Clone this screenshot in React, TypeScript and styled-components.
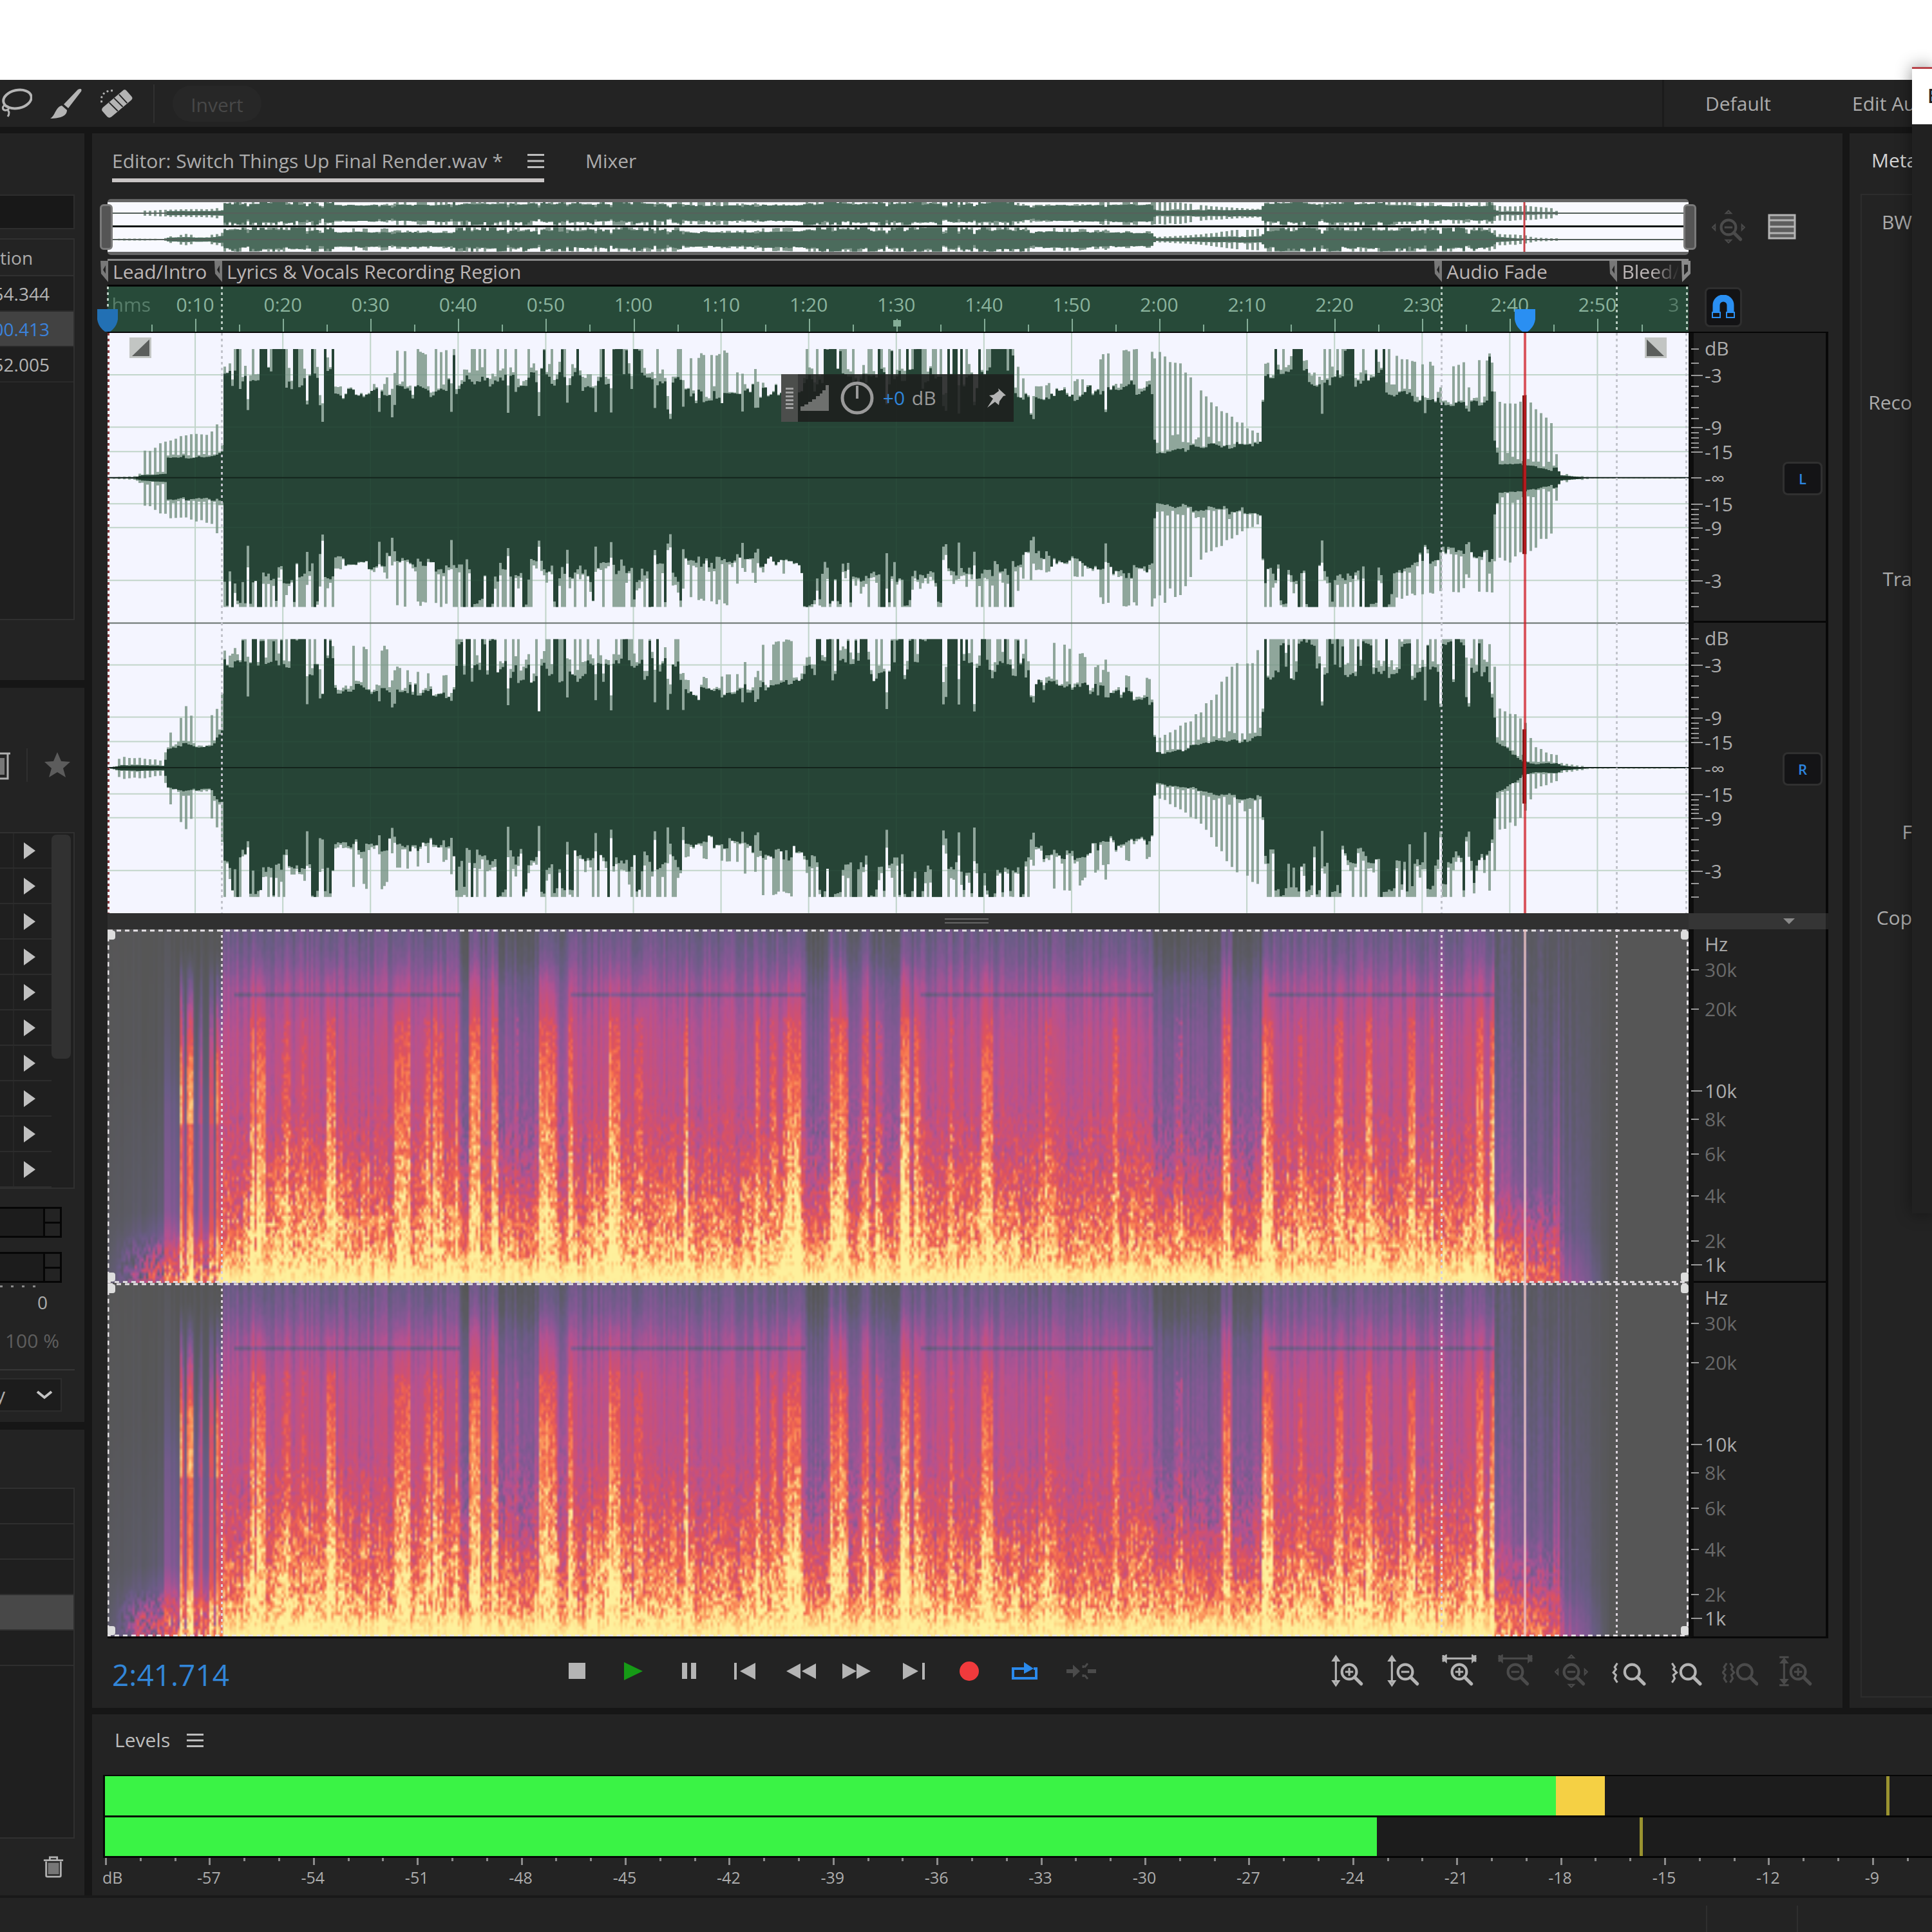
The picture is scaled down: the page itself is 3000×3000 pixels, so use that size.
import React, { useLayoutEffect, useMemo, useRef } from "react";
import styled, { createGlobalStyle, css } from "styled-components";

const GlobalStyle = createGlobalStyle`
  * { box-sizing: border-box; }
  html, body { margin: 0; background: #ffffff; }
  body {
    font-family: "Open Sans", "Noto Sans", sans-serif;
    font-size: 30px;
    line-height: 40px;
    color: #acacac;
    overflow: hidden;
  }
  button, input, select {
    font: inherit;
    color: inherit;
    background: none;
    border: 0;
    padding: 0;
    margin: 0;
  }
  svg { display: block; }
`;

/* ---------- data ---------- */

const DURATION = 180.4;
const PLAYHEAD = 161.714;
const LYRICS = 13;
const FADE = 152.2;
const BLEED = 172.2;
const at = (seconds: number) => `${(seconds / DURATION) * 100}%`;

const REGIONS = [
  { name: "Lead/Intro", start: 0, fade: false },
  { name: "Lyrics & Vocals Recording Region", start: LYRICS, fade: false },
  { name: "Audio Fade", start: FADE, fade: false },
  { name: "Bleed/T", start: BLEED, fade: true },
];

const RULER = Array.from({ length: 17 }, (_, i) => {
  const s = (i + 1) * 10;
  return { s, label: `${Math.floor(s / 60)}:${String(s % 60).padStart(2, "0")}` };
});

const DB_LABELS: [string, number][] = [
  ["dB", 24], ["-3", 66], ["-9", 147], ["-15", 185], ["-∞", 226], ["-15", 266], ["-9", 303], ["-3", 385],
];
const DB_TICKS: [number, number][] = [
  [24, 8], [46, 8], [65, 14], [82, 8], [97, 8], [115, 8], [132, 8], [146, 14], [154, 8], [162, 8], [170, 8], [177, 8],
  [184, 14], [224, 12], [265, 14], [273, 8], [281, 8], [288, 8], [294, 8], [302, 14], [317, 8], [335, 8], [352, 8],
  [367, 8], [384, 14], [403, 8], [424, 8],
];
const HZ_LABELS: [string, number, boolean][] = [
  ["Hz", 23, true], ["30k", 63, false], ["20k", 124, false], ["10k", 251, true], ["8k", 295, false],
  ["6k", 349, false], ["4k", 413, false], ["2k", 483, false], ["1k", 520, true],
];

type Stop = [number, number, number];
/* x, steady level, peak level */
const LEFT_ENVELOPE: Stop[] = [
  [0, 0, 1], [40, 1, 3], [50, 4, 40], [88, 6, 60], [92, 32, 62], [165, 34, 74], [177, 40, 130], [179, 170, 202],
  [348, 170, 202], [352, 130, 142], [430, 132, 148], [440, 132, 200], [540, 146, 202], [560, 165, 202],
  [890, 168, 202], [896, 132, 192], [970, 130, 200], [980, 134, 146], [1075, 138, 152], [1085, 166, 202],
  [1400, 170, 202], [1408, 134, 192], [1425, 122, 142], [1530, 138, 158], [1545, 144, 202], [1621, 144, 202],
  [1625, 40, 204], [1660, 46, 190], [1700, 50, 130], [1760, 52, 86], [1788, 56, 70], [1795, 170, 202],
  [1980, 168, 202], [2000, 140, 190], [2090, 112, 180], [2140, 122, 184], [2146, 170, 202], [2152, 60, 140],
  [2160, 22, 134], [2200, 22, 130], [2240, 12, 90], [2246, 20, 46], [2256, 4, 8], [2290, 1, 3], [2300, 0, 1],
  [2455, 0, 1],
];
const RIGHT_ENVELOPE: Stop[] = [
  [0, 0, 2], [20, 4, 18], [60, 4, 16], [86, 3, 12], [92, 32, 50], [120, 36, 100], [145, 32, 60], [165, 40, 90],
  [177, 60, 120], [179, 166, 202], [348, 168, 202], [352, 122, 190], [430, 124, 190], [445, 124, 160],
  [535, 122, 144], [540, 158, 202], [888, 170, 202], [894, 114, 140], [980, 124, 148], [1000, 130, 200],
  [1075, 138, 202], [1085, 166, 202], [1428, 170, 202], [1434, 132, 202], [1500, 134, 190], [1540, 122, 156],
  [1621, 110, 140], [1625, 24, 44], [1670, 30, 70], [1710, 40, 106], [1740, 42, 156], [1790, 50, 190],
  [1796, 156, 202], [2140, 150, 202], [2150, 100, 190], [2156, 40, 100], [2196, 12, 86], [2215, 6, 34],
  [2250, 8, 20], [2256, 4, 8], [2290, 1, 3], [2300, 0, 1], [2455, 0, 1],
];
const NOTCHES = [
  216, 307, 330, 419, 442, 532, 621, 668, 712, 757, 781, 848, 870, 893, 983, 1006, 1209, 1298, 1321, 1345, 1434,
  1547, 1885, 2045, 2067, 2110,
];

function randomSource(seed: number) {
  let s = seed;
  return () => {
    s = (s + 0x6d2b79f5) | 0;
    let t = Math.imul(s ^ (s >>> 15), 1 | s);
    t = (t + Math.imul(t ^ (t >>> 7), 61 | t)) ^ t;
    return ((t ^ (t >>> 14)) >>> 0) / 4294967296;
  };
}

function sample(stops: Stop[], x: number): [number, number] {
  for (let i = 1; i < stops.length; i++) {
    if (x <= stops[i][0]) {
      const a = stops[i - 1];
      const b = stops[i];
      const k = (x - a[0]) / (b[0] - a[0]);
      return [a[1] + (b[1] - a[1]) * k, a[2] + (b[2] - a[2]) * k];
    }
  }
  return [0, 0];
}

const bar = (x: number, up: number, down: number, mid: number, w: number) =>
  `M${x} ${(mid - up).toFixed(1)}h${w}V${(mid + down).toFixed(1)}h-${w}z`;

function buildWave(stops: Stop[], mid: number, seed: number, scale = 1) {
  const rnd = randomSource(seed);
  const w = 4;
  let peaks = "";
  let core = "";
  const swing = [0, 0];
  for (let x = 0; x < 2455; x += w) {
    const [low, high] = sample(stops, x);
    const notch = NOTCHES.some((n) => Math.abs(n - x) <= w / 2) && low > 100;
    const loud = low > 145;
    const sparse = low < 80;
    const depth = 86 + rnd() * 26;
    const pick = rnd();
    const spike = sparse ? (x / w) % 2 === 0 && pick > 0.15 : pick > 0.66;
    const side = (n: number) => {
      if (rnd() > 0.6) swing[n] = rnd();
      else swing[n] = swing[n] * 0.7 + rnd() * 0.3;
      let c: number;
      let p: number;
      if (notch) {
        c = depth + rnd() * 8;
        p = c + 62 * rnd();
      } else if (loud) {
        c = 124 + (low - 150) * 0.6 + 58 * swing[n] + (swing[n] > 0.62 ? 26 : 0) - n * 8;
        p = swing[n] > 0.68 || rnd() > 0.7 ? 200 : c + rnd() * 22;
      } else {
        c = low * (sparse ? 0.85 + swing[n] * 0.25 : 0.88 + swing[n] * 0.2);
        p = spike ? low + (high - low) * (0.84 + rnd() * 0.16) : c + (high - low) * rnd() * 0.16;
      }
      c = Math.min(200, c);
      p = Math.min(200, Math.max(c, p));
      return [p * scale, c * scale];
    };
    const [pu, cu] = side(0);
    const [pd, cd] = side(1);
    peaks += bar(x, pu, pd, mid, w);
    core += bar(x, cu, cd, mid, w);
  }
  return { peaks, core };
}

/* ---------- spectrogram ---------- */

const PALETTE: [number, number, number, number][] = [
  [0, 86, 86, 86], [0.1, 92, 91, 102], [0.2, 106, 92, 134], [0.3, 136, 88, 150], [0.4, 180, 82, 146],
  [0.5, 206, 80, 116], [0.6, 226, 84, 88], [0.7, 246, 112, 78], [0.8, 252, 158, 96], [0.9, 254, 206, 126],
  [1, 254, 240, 156],
];
const LOUD: [number, number][] = [
  [0, 0.2], [0.08, 0.26], [0.16, 0.35], [0.3, 0.42], [0.5, 0.45], [0.66, 0.49], [0.78, 0.56], [0.88, 0.67],
  [0.93, 0.78], [0.98, 0.95], [1, 1],
];
const INTRO: [number, number][] = [[0, 0.01], [0.4, 0.05], [0.8, 0.16], [0.92, 0.32], [1, 0.4]];
const OUTRO: [number, number][] = [[0, 0.14], [0.3, 0.22], [0.6, 0.3], [0.85, 0.4], [0.93, 0.54], [1, 0.66]];
/* centre, half width, strength */
const HOT: [number, number, number][] = [
  [115, 4, 0.8], [125, 5, 0.9], [141, 3, 0.4], [160, 3, 0.8], [172, 5, 0.7], [223, 4, 0.8], [236, 8, 1],
  [275, 6, 0.35], [303, 3, 0.35], [345, 7, 1], [446, 3, 0.9], [458, 10, 0.85], [495, 4, 0.8], [511, 9, 0.7],
  [540, 3, 0.5], [568, 8, 1.05], [600, 5, 0.8], [635, 3, 0.4], [683, 14, 1], [718, 4, 0.8], [785, 8, 1],
  [822, 6, 0.6], [895, 3, 0.85], [1008, 4, 0.95], [1030, 5, 0.7], [1062, 14, 0.8], [1126, 4, 0.8], [1140, 10, 0.9],
  [1175, 5, 0.5], [1197, 5, 0.6], [1235, 7, 1.1], [1257, 5, 0.9], [1310, 3, 0.35], [1365, 9, 0.85],
  [1459, 4, 0.6], [1564, 5, 0.6], [1662, 4, 0.4], [1736, 6, 0.8], [1800, 8, 1.05], [1850, 4, 0.6],
  [1909, 6, 0.8], [1956, 6, 0.8], [2023, 5, 0.8], [2055, 3, 0.4], [2129, 6, 0.95], [2148, 4, 0.9], [2247, 5, 0.8],
];
/* start, end, depth */
const QUIET: [number, number, number][] = [
  [544, 560, 0.9], [576, 592, 0.3], [606, 668, 0.7], [696, 714, 0.4], [1083, 1118, 0.9], [1146, 1170, 0.4],
  [1182, 1230, 0.5], [1244, 1252, 0.3], [1623, 1728, 0.9], [1744, 1792, 0.8],
];
const CUT_LINES: [number, number][] = [[195, 544], [716, 1083], [1262, 1623], [1800, 2150]];

function curve(points: [number, number][], f: number) {
  for (let i = 1; i < points.length; i++) {
    if (f <= points[i][0]) {
      const [x0, y0] = points[i - 1];
      const [x1, y1] = points[i];
      return y0 + ((y1 - y0) * (f - x0)) / (x1 - x0);
    }
  }
  return points[points.length - 1][1];
}
const clamp = (v: number, lo = 0, hi = 1) => Math.max(lo, Math.min(hi, v));

function paintSpectrogram(canvas: HTMLCanvasElement, seed: number) {
  const W = 700;
  const H = 100;
  canvas.width = W;
  canvas.height = H;
  const ctx = canvas.getContext("2d");
  if (!ctx) return;
  const image = ctx.createImageData(W, H);
  const columns = randomSource(11);
  const specks = randomSource(seed);
  const beat = randomSource(5);
  let pulse = 0;
  for (let i = 0; i < W; i++) {
    const x = i * (2455 / W);
    const jitter = columns() - 0.5;
    if (i % 4 === 0) pulse = beat();
    let hot = 0;
    HOT.forEach(([c, half, power]) => {
      if (Math.abs(x - c) <= half) hot = Math.max(hot, power * (0.55 + columns() * 0.5));
    });
    const quiet = QUIET.reduce((q, [a, b, d]) => (x >= a && x <= b ? Math.max(q, d) : q), 0);
    const cut = CUT_LINES.some(([a, b]) => x >= a && x <= b);
    const body = x >= 178 && x < 2153;
    const left = clamp(1 - (x - 2153) / 178);
    const decay = Math.pow(left, 0.6);
    const rise = clamp(0.3 + x / 130);
    const reach = 0.5 + beat() * 0.25;
    let r = specks();
    for (let j = 0; j < H; j++) {
      const f = j / (H - 1);
      r = r * 0.3 + specks() * 0.7;
      const r2 = specks();
      const low = clamp((f - 0.4) / 0.5);
      let v: number;
      if (body) {
        v = curve(LOUD, f) + jitter * 0.12;
        v -= quiet * 0.17 * (1 - clamp((f - 0.6) / 0.35));
        v += hot * 0.3 * clamp((f - 0.05) / 0.4) * (1 - clamp((f - 0.85) / 0.15));
        v += (r - 0.5) * (0.04 + 0.42 * low * (1 - clamp((f - 0.94) / 0.06)));
        if (f > reach) v += pulse * 0.14 * clamp((f - reach) / 0.15) * (1 - quiet * 0.6) * (1 - clamp((f - 0.9) / 0.1));
        if (r2 > 0.9 - pulse * 0.26 && f > 0.52) v += 0.22 * low * (1 - quiet * 0.6);
        if (hot && r2 > 0.6 && f > 0.25) v += 0.1;
        if (cut && Math.round(f * 548) > 98 && Math.round(f * 548) < 105) v -= 0.15;
      } else if (x < 178) {
        v = curve(INTRO, f) * rise + jitter * 0.1 * rise + (x > 85 ? 0.12 * clamp(f * 2) : 0);
        v += hot * clamp((f - 0.05) / 0.35) * (r * 0.3 + 0.75) * (f > 0.55 ? 0.58 : 0.85);
        v += (r - 0.35) * 0.7 * clamp((f - 0.86) / 0.1) * clamp((x - 10) / 40);
      } else {
        v = (curve(OUTRO, f) + jitter * 0.14) * decay + (r - 0.5) * 0.06 * decay;
        v += clamp((f - 0.72) / 0.2) * (0.16 + (r - 0.5) * 0.5) * clamp((2262 - x) / 20);
        v += hot * 0.24 * clamp(f * 1.5);
        if (left <= 0) v = 0;
      }
      v = clamp(v);
      let k = 1;
      while (k < PALETTE.length - 1 && v > PALETTE[k][0]) k++;
      const a = PALETTE[k - 1];
      const b = PALETTE[k];
      const m = (v - a[0]) / (b[0] - a[0]);
      const o = (j * W + i) * 4;
      image.data[o] = a[1] + (b[1] - a[1]) * m;
      image.data[o + 1] = a[2] + (b[2] - a[2]) * m;
      image.data[o + 2] = a[3] + (b[3] - a[3]) * m;
      image.data[o + 3] = 255;
    }
  }
  ctx.putImageData(image, 0, 0);
}

/* ---------- layout ---------- */

const Window = styled.div`
  position: relative;
  min-height: 100vh;
  padding-top: 124px;
  display: flex;
  flex-direction: column;
  background: #ffffff;
  overflow: hidden;
`;
const Toolbar = styled.header`
  height: 73px;
  background: #232323;
  display: flex;
  align-items: stretch;
  justify-content: space-between;
`;
const ToolGroup = styled.div`
  display: flex;
  align-items: center;
  gap: 28px;
`;
const IconButton = styled.button<{ $w?: number; $dim?: boolean }>`
  width: ${(p) => p.$w ?? 50}px;
  height: 56px;
  display: flex;
  align-items: center;
  justify-content: center;
  color: ${(p) => (p.$dim ? "#4b4b4b" : "#b4b4b4")};
`;
const ToolRule = styled.span`
  width: 2px;
  height: 60px;
  background: #303030;
  margin-left: 4px;
`;
const Invert = styled.button`
  width: 138px;
  height: 56px;
  padding-top: 4px;
  border-radius: 28px;
  background: #272727;
  color: #484848;
`;
const Workspaces = styled.nav`
  width: 419px;
  border-left: 3px solid #1b1b1b;
  padding-left: 64px;
  display: flex;
  align-items: center;
  gap: 126px;
  white-space: nowrap;
  overflow: hidden;
`;
const Desk = styled.div`
  flex: 1;
  display: flex;
  gap: 12px;
  padding-top: 10px;
  background: #161616;
`;
const Sidebar = styled.div`
  width: 131px;
  flex: none;
  display: grid;
  grid-template-rows: minmax(0, 850fr) minmax(0, 1140fr) minmax(0, 724fr);
  row-gap: 12px;
`;
const Column = styled.div`
  flex: 1;
  min-width: 0;
  display: flex;
  flex-direction: column;
  gap: 10px;
`;
const Panel = styled.section`
  background: #232323;
  overflow: hidden;
`;
const UpperRow = styled.div`
  flex: 1;
  display: flex;
  gap: 11px;
`;

/* left column */
const MarkersPanel = styled(Panel)`
  display: flex;
  flex-direction: column;
  padding: 95px 15px 93px 0;
`;
const Search = styled.input`
  height: 54px;
  width: 100%;
  background: #181818;
  border: 2px solid #2d2d2d;
  border-left: 0;
  margin-bottom: 14px;
`;
const ListFrame = styled.div`
  flex: 1;
  background: #1f1f1f;
  border: 2px solid #303030;
  border-left: 0;
  overflow: hidden;
`;
const MarkerTable = styled.table`
  width: 100%;
  border-collapse: collapse;
  font-size: 28px;
`;
const HeadCell = styled.th`
  height: 56px;
  padding: 0;
  font-weight: 400;
  text-align: left;
  background: #232323;
  border-bottom: 2px solid #303030;
`;
const MarkerRow = styled.tr<{ $on?: boolean }>`
  background: ${(p) => (p.$on ? "#424242" : "transparent")};
  color: ${(p) => (p.$on ? "#3b82dc" : "#b4b4b4")};
`;
const MarkerCell = styled.td`
  height: 55px;
  padding: 0 37px 0 0;
  border-bottom: 2px solid #2a2a2a;
`;
const RightText = styled.div`
  display: flex;
  justify-content: flex-end;
  overflow: hidden;
  width: 77px;
`;
const RackPanel = styled(Panel)`
  display: flex;
  flex-direction: column;
  padding-right: 15px;
  & > * { flex-shrink: 0; }
`;
const RackTools = styled.div`
  height: 224px;
  padding: 16px 6px 0 0;
  display: flex;
  align-items: center;
  justify-content: space-between;
`;
const RackFrame = styled(ListFrame)`
  flex: none;
  display: flex;
  margin-bottom: 28px;
`;
const RackList = styled.ul`
  list-style: none;
  margin: 0;
  padding: 0;
  flex: 1;
`;
const RackItem = styled.li`
  height: 55px;
  display: flex;
  justify-content: flex-end;
  align-items: center;
  border-bottom: 2px solid #2c2c2c;
`;
const RackArrow = styled.button`
  width: 60px;
  height: 53px;
  border-left: 2px solid #272727;
  padding-left: 15px;
  color: #c0c0c0;
`;
const ScrollThumb = styled.div`
  width: 30px;
  height: 348px;
  margin: 2px 4px 0 0;
  border-radius: 8px;
  background: #313131;
`;
const MiniMeter = styled.div`
  height: 48px;
  width: 96px;
  border: 3px solid #060606;
  border-left: 0;
  margin-bottom: 22px;
  display: flex;
  justify-content: flex-end;
  background: #1c1c1c;
  & + & { margin-bottom: 4px; }
`;
const MiniClip = styled.div`
  width: 26px;
  border-left: 3px solid #060606;
  background: linear-gradient(#060606, #060606) 0 50% / 100% 3px no-repeat #232323;
`;
const MiniScale = styled.div`
  height: 52px;
  padding: 6px 57px 0 0;
  display: flex;
  justify-content: flex-end;
  width: 131px;
  font-size: 28px;
  background: repeating-linear-gradient(90deg, #8a8a8a 0 4px, transparent 4px 17px) 0 0 / 66px 3px no-repeat;
`;
const Percent = styled.div`
  height: 80px;
  padding: 14px 24px 0 0;
  text-align: right;
  color: #5e5e5e;
  white-space: nowrap;
  border-bottom: 2px solid #363636;
`;
const PickerWrap = styled.label`
  margin-top: 12px;
  height: 52px;
  width: 96px;
  border: 2px solid #2d2d2d;
  border-left: 0;
  background: #1c1c1c;
  display: flex;
  align-items: center;
  justify-content: space-between;
  padding-right: 12px;
`;
const Picker = styled.select`
  appearance: none;
  width: 40px;
  text-indent: -7px;
  outline: 0;
`;
const HistoryPanel = styled(Panel)`
  display: flex;
  flex-direction: column;
  padding: 90px 15px 0 0;
`;
const HistoryRow = styled.div<{ $on?: boolean }>`
  height: 55px;
  border-bottom: 2px solid #2f2f2f;
  background: ${(p) => (p.$on ? "#484848" : "transparent")};
`;
const HistoryFoot = styled.div`
  height: 88px;
  display: flex;
  align-items: center;
  justify-content: flex-end;
  padding-right: 15px;
`;

/* editor */
const EditorPanel = styled(Panel)`
  flex: 1;
  min-width: 0;
  display: flex;
  flex-direction: column;
  padding: 0 22px 0 24px;
`;
const Tabs = styled.div`
  height: 102px;
  display: flex;
  align-items: flex-start;
  gap: 64px;
  padding: 24px 0 0 7px;
`;
const Tab = styled.button<{ $on?: boolean }>`
  height: 52px;
  padding-bottom: 8px;
  display: flex;
  align-items: center;
  gap: 38px;
  white-space: nowrap;
  border-bottom: 6px solid ${(p) => (p.$on ? "#c9c5c5" : "transparent")};
`;
const Board = styled.div`
  flex: 1;
  display: grid;
  grid-template-columns: minmax(0, 1fr) 217px;
  grid-template-rows: 93px 43px 72px minmax(300px, 899fr) 25px minmax(400px, 1099fr);
`;
const Overview = styled.div`
  position: relative;
  height: 87px;
  border: 5px solid #666666;
  border-width: 5px 0;
  border-radius: 5px;
  background: #f8f9ff;
`;
const Fill = styled.svg`
  position: absolute;
  inset: 0;
  width: 100%;
  height: 100%;
`;
const Grip = styled.span<{ $right?: boolean }>`
  position: absolute;
  top: 3px;
  bottom: 3px;
  width: 20px;
  ${(p) => (p.$right ? "right: -12px;" : "left: -12px;")}
  border-radius: 6px;
  background: #555555;
  border: 3px solid #7a7a7a;
`;
const OverviewTools = styled.div`
  display: flex;
  align-items: center;
  padding-left: 32px;
  height: 85px;
  gap: 14px;
`;
const MarkerBar = styled.div`
  position: relative;
  border-top: 3px solid #8a8a8a;
  border-bottom: 3px solid #050505;
`;
const MarkerName = styled.span<{ $fade?: boolean }>`
  position: absolute;
  top: -3px;
  padding-left: 8px;
  white-space: nowrap;
  color: #bcb6b6;
  ${(p) => p.$fade && css`
    width: 96px;
    overflow: hidden;
    mask-image: linear-gradient(90deg, #000 55px, transparent 98px);
  `}
`;
const MarkerFlag = styled.svg`
  position: absolute;
  top: 0;
  margin-left: -11px;
`;
const Ruler = styled.div`
  position: relative;
  background: #274a39;
  border-bottom: 2px solid #050505;
  color: #8ab39d;
`;
const RulerLabel = styled.span<{ $dim?: boolean }>`
  position: absolute;
  top: 8px;
  transform: translateX(-50%);
  white-space: nowrap;
  opacity: ${(p) => (p.$dim ? 0.5 : 1)};
`;
const RulerTick = styled.span<{ $minor?: boolean }>`
  position: absolute;
  bottom: 0;
  width: 2px;
  height: ${(p) => (p.$minor ? 11 : 20)}px;
  background: #84ad97;
`;
const Head = styled.svg`
  position: absolute;
  bottom: 0;
  margin-left: -17px;
  z-index: 2;
`;
const SnapCell = styled.div`
  padding: 1px 0 0 25px;
  border-bottom: 2px solid #050505;
`;
const SnapButton = styled.button`
  width: 58px;
  height: 62px;
  border: 3px solid #2f2f2f;
  border-radius: 8px;
  background: #131315;
  display: flex;
  align-items: center;
  justify-content: center;
`;
const WaveArea = styled.div`
  position: relative;
  background: #f4f5ff;
  overflow: hidden;
`;
const Dotted = styled.span<{ $tone?: string }>`
  position: absolute;
  top: 0;
  bottom: 0;
  width: 3px;
  margin-left: -1px;
  background: repeating-linear-gradient(180deg, ${(p) => p.$tone ?? "#c2c4cc"} 0 4px, transparent 4px 9px);
`;
const Playline = styled.span<{ $soft?: boolean }>`
  position: absolute;
  top: 0;
  bottom: 0;
  width: 4px;
  margin-left: -2px;
  background: ${(p) => (p.$soft ? "rgba(236, 196, 196, 0.75)" : "rgba(206, 28, 34, 0.72)")};
`;
const FadeHandle = styled.svg<{ $right?: boolean }>`
  position: absolute;
  top: 7px;
  ${(p) => (p.$right ? "right: 34px;" : "left: 34px;")}
`;
const Hud = styled.div`
  position: absolute;
  left: 42.6%;
  top: 64px;
  width: 361px;
  height: 74px;
  display: flex;
  align-items: center;
  background: rgba(30, 31, 30, 0.88);
  color: #9a9a9a;
`;
const HudGrip = styled.span`
  width: 26px;
  height: 74px;
  margin-right: 4px;
  background: repeating-linear-gradient(180deg, #a0a0a0 0 3px, transparent 3px 6px) 50% 50% / 12px 33px no-repeat #4c4e4c;
`;
const Gain = styled.label`
  display: flex;
  align-items: center;
  margin-left: 12px;
`;
const GainInput = styled.input`
  width: 45px;
  color: #2f86dc;
  outline: 0;
`;
const PinButton = styled.button`
  margin: 0 10px 0 auto;
  color: #b4b4b4;
`;
const Axis = styled.div`
  position: relative;
  border-left: 8px solid #0d0d0d;
  border-right: 4px solid #080808;
  background: #212121;
  display: grid;
  grid-template-rows: 1fr 1fr;
`;
const AxisHalf = styled.div`
  position: relative;
  & + & { box-shadow: 0 -3px 0 #080808; }
`;
const AxisLabel = styled.span<{ $dim?: boolean }>`
  position: absolute;
  left: 17px;
  transform: translateY(-50%);
  color: ${(p) => (p.$dim ? "#6a6a6a" : "#acacac")};
`;
const AxisTick = styled.span`
  position: absolute;
  left: -4px;
  height: 2px;
  background: #9a9a9a;
`;
const ChannelButton = styled.button`
  position: absolute;
  right: 5px;
  top: 50%;
  margin-top: -25px;
  width: 62px;
  height: 52px;
  border: 3px solid #303030;
  border-radius: 8px;
  background: #141416;
  color: #2d86e0;
  font-size: 22px;
  font-weight: 600;
`;
const Splitter = styled.div`
  background: #303030;
  display: flex;
  justify-content: center;
  align-items: center;
  padding-left: 212px;
`;
const SplitGrip = styled.span`
  width: 68px;
  height: 8px;
  border: 2px solid #666666;
  border-width: 2px 0;
`;
const SplitEnd = styled.button`
  background: #353535;
  margin-right: 4px;
  display: flex;
  align-items: center;
  justify-content: flex-end;
  padding-right: 48px;
`;
const SpectrumStack = styled.div`
  position: relative;
  display: grid;
  grid-template-rows: 1fr 1fr;
  border-bottom: 3px solid #050505;
`;
const Spectrum = styled.div`
  position: relative;
  overflow: hidden;
`;
const Canvas = styled.canvas`
  position: absolute;
  inset: 0;
  width: 100%;
  height: 100%;
`;
const Corner = styled.span<{ $x: "left" | "right"; $y: "top" | "bottom" }>`
  position: absolute;
  ${(p) => p.$x}: 0;
  ${(p) => p.$y}: 2px;
  width: 12px;
  height: 14px;
  border-radius: 4px;
  background: #dddddd;
`;
const Transport = styled.div`
  height: 108px;
  display: grid;
  grid-template-columns: 685fr 870px 327fr 783px 7px;
  align-items: center;
`;
const Clock = styled.output`
  padding: 4px 0 0 7px;
  font-size: 46px;
  line-height: 56px;
  color: #3286d8;
`;
const Buttons = styled.div`
  display: flex;
  height: 62px;
`;
const Spacer = styled.span``;

/* metadata side */
const SidePanel = styled(Panel)`
  width: 128px;
  flex: none;
  display: flex;
  flex-direction: column;
  padding-bottom: 16px;
`;
const SideTitle = styled.h2`
  margin: 0;
  height: 94px;
  padding: 22px 30px 0 34px;
  font-size: 30px;
  line-height: 40px;
  font-weight: 400;
  color: #d4d4d4;
  overflow: hidden;
`;
const SideForm = styled.div`
  flex: 1;
  margin-left: 17px;
  border: 2px solid #2d2d2d;
  border-right: 0;
  display: flex;
  flex-direction: column;
  align-items: flex-end;
  padding: 22px 31px 0 0;
`;
const SideLabel = styled.span<{ $gap: number }>`
  margin-bottom: ${(p) => p.$gap}px;
`;

/* levels */
const LevelsPanel = styled(Panel)`
  height: 281px;
  flex: none;
`;
const LevelsTitle = styled.div`
  height: 94px;
  padding: 20px 0 0 35px;
  display: flex;
  align-items: flex-start;
  gap: 26px;
  color: #bdbdbd;
`;
const Meter = styled.div`
  margin-left: 17px;
  border: 3px solid #060606;
  border-width: 2px 0 3px 3px;
  height: 129px;
  display: grid;
  grid-template-rows: 1fr 1fr;
  row-gap: 3px;
  background: #060606;
`;
const MeterRow = styled.div`
  position: relative;
  background: #1c1c1c;
  display: flex;
`;
const MeterFill = styled.span<{ $color: string }>`
  background: ${(p) => p.$color};
`;
const PeakHold = styled.span`
  position: absolute;
  top: 0;
  bottom: 0;
  width: 5px;
  background: #9a9330;
`;
const MeterScale = styled.div`
  position: relative;
  margin-left: 20px;
  height: 56px;
  font-size: 25px;
  line-height: 34px;
`;
const ScaleTick = styled.span<{ $minor?: boolean }>`
  position: absolute;
  top: 0;
  width: 3px;
  height: ${(p) => (p.$minor ? 5 : 11)}px;
  background: #8c8c8c;
`;
const ScaleLabel = styled.span<{ $first?: boolean }>`
  position: absolute;
  top: 13px;
  ${(p) => (p.$first ? "margin-left: -4px;" : "transform: translateX(-50%);")}
`;
const StatusBar = styled.footer`
  height: 57px;
  border-top: 4px solid #191919;
  background: #232323;
  display: flex;
  justify-content: flex-end;
  gap: 139px;
  padding: 12px 208px 0 0;
`;
const Rule = styled.span<{ $h?: number }>`
  width: 2px;
  ${(p) => p.$h && css`height: ${p.$h}px;`}
  background: #2f2f2f;
`;

/* window that lies over the right edge */
const Floating = styled.aside`
  position: absolute;
  right: 0;
  top: 104px;
  width: 31px;
  height: 1780px;
  z-index: 5;
  background: #212121;
  box-shadow: 0 0 26px rgba(0, 0, 0, 0.45);
`;
const FloatingTitle = styled.div`
  height: 89px;
  border-top: 3px solid #b8454b;
  background: #ffffff;
  color: #202020;
  padding: 22px 0 0 24px;
  font-weight: 600;
  overflow: hidden;
`;

/* ---------- icons ---------- */

const Burger = () => (
  <svg width="26" height="24" viewBox="0 0 26 24" fill="#bdbdbd">
    <path d="M0 1h26v3H0zM0 10.500h26v3H0zM0 20h26v3H0z" />
  </svg>
);
const Lasso = () => (
  <svg width="50" height="48" viewBox="0 0 50 48" fill="none" stroke="currentColor" strokeWidth="4">
    <ellipse cx="27" cy="17" rx="22" ry="14" transform="rotate(-12 27 17)" />
    <path d="M8 26c-6 3-4 9 2 8s4-7-2-6M12 34c3 3 2 7 0 10" strokeWidth="3" />
  </svg>
);
const Brush = () => (
  <svg width="50" height="48" viewBox="0 0 50 48" fill="currentColor">
    <path d="M46 1c3 0 3 2 2 4L28 31l-7-6L43 2zM18 27l8 7c0 8-8 13-26 13 8-4 8-18 18-20z" />
  </svg>
);
const Healing = () => (
  <svg width="52" height="48" viewBox="0 0 52 48" fill="none">
    <path d="M11 45 3 36Q1 33 4 30L36 3q3-3 6 0l8 9q3 3 0 6L18 45q-4 3-7 0z" fill="currentColor" />
    <path d="m14 22 14 14M22 15l14 14M30 9l13 14" stroke="#232323" strokeWidth="2" />
    <path d="M2 22C-1 10 8 2 20 3" stroke="currentColor" strokeWidth="3" strokeDasharray="3 4" />
  </svg>
);
const Trash = () => (
  <svg width="34" height="36" viewBox="0 0 36 36" fill="none" stroke="#b0b0b0" strokeWidth="3">
    <path d="M2 7h32M12 6V2h12v4M6 9v23q0 2 2 2h20q2 0 2-2V9" />
    <path d="M9 11h18v19H9z" fill="#777777" stroke="none" />
  </svg>
);
const Triangle = () => (
  <svg width="18" height="26" viewBox="0 0 18 26" fill="currentColor"><path d="M0 0 18 13 0 26z" /></svg>
);

type ZoomKind = "vin" | "vout" | "hin" | "hout" | "full" | "left" | "right" | "sel" | "selv";
const ZoomGlyph = ({ kind }: { kind: ZoomKind }) => {
  const cx = { vin: 29, vout: 29, hin: 26, hout: 26, full: 26, left: 33, right: 33, sel: 34, selv: 30 }[kind];
  const sign = !["left", "right", "sel"].includes(kind);
  const plus = ["vin", "hin", "selv"].includes(kind);
  return (
    <svg width="56" height="52" viewBox="0 0 54 50" fill="none" stroke="currentColor" strokeWidth="3">
      <circle cx={cx} cy="26" r="11" strokeWidth="4" />
      <path d={`M${cx + 8} 34l10 10`} strokeWidth="5" strokeLinecap="round" />
      {sign && <path d={`M${cx - 6} 26h12`} />}
      {plus && <path d={`M${cx} 20v12`} />}
      {(kind === "vin" || kind === "vout") && <path d="M9 6v36M5 9l4-6 4 6zM5 40l4 6 4-6z" />}
      {(kind === "hin" || kind === "hout") && <path d="M2 6h48M6 2 2 6l4 4zM46 2l4 4-4 4zM2 1v10M50 1v10" />}
      {kind === "full" && <path d="M22 5l4-4 4 4zM22 45l4 4 4-4zM6 22l-4 4 4 4zM46 22l4 4-4 4z" strokeWidth="2" />}
      {kind === "left" && <path d="M11 13l-4 6 2 3-4 5 4 4-2 5 4 6" />}
      {kind === "right" && <path d="M9 13l4 6-2 3 5 5-5 4 2 5-4 6" />}
      {kind === "sel" && <path d="M7 13l-4 6 2 3-4 5 4 4-2 5 4 6M12 13l4 6-2 3 4 5-4 4 2 5-4 6" />}
      {kind === "selv" && <path d="M9 8v34M2 4h14M2 46h14M5 12l4-5 4 5zM5 38l4 5 4-5z" />}
    </svg>
  );
};
const TRANSPORT: { name: string; color?: string; art: React.ReactNode }[] = [
  { name: "Stop", art: <path d="M2 2h26v25H2z" /> },
  { name: "Play", color: "#169a16", art: <path d="M1 1l29 14L1 29z" /> },
  { name: "Pause", art: <path d="M4 2h8v25H4zM18 2h8v25h-8z" /> },
  { name: "To start", art: <path d="M-2 2h4v26h-4zM31 2v26L7 15z" /> },
  { name: "Rewind", art: <path d="M14 3v24L-8 15zM38 3v24L16 15z" /> },
  { name: "Forward", art: <path d="M-8 3v24l22-12zM14 3v24l22-12z" /> },
  { name: "To end", art: <path d="M-1 2v26l24-13zM29 2h4v26h-4z" /> },
  { name: "Record", color: "#f03a3c", art: <circle cx="15" cy="15" r="15" /> },
  {
    name: "Loop",
    color: "#2b8aec",
    art: (
      <>
        <path d="M3 11H-4v15h36V11h-4" fill="none" stroke="currentColor" strokeWidth="4" />
        <path d="M3 9h10V1l15 10-15 8v-6H3z" />
      </>
    ),
  },
  {
    name: "Skip selection",
    color: "#4b4b4b",
    art: (
      <>
        <path d="M-8 12H2V5l11 10L2 25v-7h-10zM25 12h13v6H25z" />
        <path d="M18 6v4M18 20v4M25 3l-5 6M25 27l-5-6" fill="none" stroke="currentColor" strokeWidth="3" />
      </>
    ),
  },
];
const ZOOMS: [ZoomKind, string, boolean][] = [
  ["vin", "Zoom in amplitude", false], ["vout", "Zoom out amplitude", false], ["hin", "Zoom in time", false],
  ["hout", "Zoom out time", true], ["full", "Zoom out full", true], ["left", "Zoom to in point", false],
  ["right", "Zoom to out point", false], ["sel", "Zoom to selection", true], ["selv", "Zoom all tracks", true],
];

/* ---------- parts ---------- */

const WaveChart = () => {
  const left = useMemo(() => buildWave(LEFT_ENVELOPE, 225, 7), []);
  const right = useMemo(() => buildWave(RIGHT_ENVELOPE, 675, 23), []);
  const grid = [65, 146, 184, 265, 302, 384].flatMap((y) => [y, y + 450]).map((y) => `M0 ${y}h2455`).join("");
  const lines = RULER.map(({ s }) => `M${(s / DURATION) * 2455} 0v900`).join("");
  return (
    <Fill viewBox="0 0 2455 900" preserveAspectRatio="none">
      <path d={grid + lines} stroke="#d3e2da" strokeWidth="2" fill="none" />
      <path d={left.peaks + right.peaks} fill="#8fa69b" />
      <path d={left.core + right.core} fill="#264436" />
      <path d={grid + lines} stroke="#3f7a5a" strokeOpacity="0.12" strokeWidth="2" fill="none" />
      <path d="M0 224.500h2455M0 674.500h2455" stroke="#14241c" strokeWidth="2" />
      <path d="M0 450h2455" stroke="#66706c" strokeWidth="2" />
      <path d="M2200 97v246M2200 615v115" stroke="#6d1712" strokeWidth="6" />
    </Fill>
  );
};

const OverviewChart = () => {
  const left = useMemo(() => buildWave(LEFT_ENVELOPE, 17, 7, 0.092), []);
  const right = useMemo(() => buildWave(RIGHT_ENVELOPE, 58, 23, 0.092), []);
  return (
    <Fill viewBox="0 0 2455 77" preserveAspectRatio="none">
      <path d={left.peaks + right.peaks} fill="#7f968b" />
      <path d={left.core + right.core} fill="#4b6b5c" />
      <path d="M0 17h2455M0 58h2455" stroke="#55605b" strokeWidth="2" />
      <path d="M0 37.500h2455" stroke="#0c1612" strokeWidth="3" />
      <path d="M2200 0v77" stroke="#c8444a" strokeWidth="3" />
    </Fill>
  );
};

const SpectrumChart = ({ seed }: { seed: number }) => {
  const ref = useRef<HTMLCanvasElement>(null);
  useLayoutEffect(() => {
    if (ref.current) paintSpectrogram(ref.current, seed);
  }, [seed]);
  return (
    <Spectrum>
      <Canvas ref={ref} />
      <Fill>
        <rect x="1" y="2" width="99.900%" height="99.400%" fill="none" stroke="#e6e2e6" strokeWidth="3" strokeDasharray="7 6" />
      </Fill>
      <Corner $x="left" $y="top" />
      <Corner $x="right" $y="top" />
      <Corner $x="left" $y="bottom" />
      <Corner $x="right" $y="bottom" />
    </Spectrum>
  );
};

const DecibelAxis = ({ channel }: { channel: string }) => (
  <AxisHalf>
    {DB_TICKS.map(([y, w]) => (
      <AxisTick key={y} style={{ top: `${(y / 450) * 100}%`, width: w + 4 }} />
    ))}
    {DB_LABELS.map(([text, y]) => (
      <AxisLabel key={y} style={{ top: `${(y / 450) * 100}%` }}>{text}</AxisLabel>
    ))}
    <ChannelButton>{channel}</ChannelButton>
  </AxisHalf>
);

const HertzAxis = () => (
  <AxisHalf>
    {HZ_LABELS.map(([text, y, strong]) => (
      <React.Fragment key={text}>
        {text !== "Hz" && <AxisTick style={{ top: `${((y - 1) / 548) * 100}%`, width: strong ? 17 : 12 }} />}
        <AxisLabel $dim={!strong} style={{ top: `${(y / 548) * 100}%` }}>{text}</AxisLabel>
      </React.Fragment>
    ))}
  </AxisHalf>
);

const Playhead = ({ color }: { color: string }) => (
  <path d="M1 0h32v16q-2 12-12 19h-8Q3 28 1 16z" fill={color} />
);

const LeftColumn = () => (
  <Sidebar>
    <MarkersPanel>
      <Search aria-label="Search markers" />
      <ListFrame>
        <MarkerTable>
          <thead>
            <tr><HeadCell scope="col">tion</HeadCell></tr>
          </thead>
          <tbody>
            {["54.344", "00.413", "52.005"].map((value, i) => (
              <MarkerRow key={value} $on={i === 1}>
                <MarkerCell><RightText>{value}</RightText></MarkerCell>
              </MarkerRow>
            ))}
          </tbody>
        </MarkerTable>
      </ListFrame>
    </MarkersPanel>
    <RackPanel>
      <RackTools>
        <svg width="16" height="50" viewBox="0 0 16 50" fill="none" stroke="#b0b0b0" strokeWidth="3">
          <path d="M0 7h16M12 8v38H0" />
          <path d="M0 14h7v26H0z" fill="#777777" stroke="none" />
        </svg>
        <Rule $h={52} />
        <svg width="42" height="42" viewBox="0 0 42 42" fill="#5c5c5c">
          <path d="m21 1 6 14 14 1-11 10 4 14-13-8-13 8 4-14L1 16l14-1z" />
        </svg>
      </RackTools>
      <RackFrame>
        <RackList>
          {Array.from({ length: 10 }, (_, i) => (
            <RackItem key={i}>
              <RackArrow aria-label={`Open slot ${i + 1}`}><Triangle /></RackArrow>
            </RackItem>
          ))}
        </RackList>
        <ScrollThumb />
      </RackFrame>
      <MiniMeter><MiniClip /></MiniMeter>
      <MiniMeter><MiniClip /></MiniMeter>
      <MiniScale>0</MiniScale>
      <Percent>100 %</Percent>
      <PickerWrap aria-label="Process">
        <Picker><option>y</option></Picker>
        <svg width="26" height="14" viewBox="0 0 26 14" fill="none" stroke="#c4c4c4" strokeWidth="4">
          <path d="m2 2 11 9 11-9" />
        </svg>
      </PickerWrap>
    </RackPanel>
    <HistoryPanel>
      <ListFrame>
        {[0, 1, 2, 3, 4].map((i) => <HistoryRow key={i} $on={i === 3} />)}
      </ListFrame>
      <HistoryFoot>
        <IconButton $w={36} aria-label="Delete"><Trash /></IconButton>
      </HistoryFoot>
    </HistoryPanel>
  </Sidebar>
);

const Editor = () => (
  <EditorPanel>
    <Tabs>
      <Tab $on>Editor: Switch Things Up Final Render.wav * <Burger /></Tab>
      <Tab>Mixer</Tab>
    </Tabs>
    <Board>
      <div>
        <Overview><OverviewChart /><Grip /><Grip $right /></Overview>
      </div>
      <OverviewTools>
        <IconButton $w={62} $dim aria-label="Zoom out full"><ZoomGlyph kind="full" /></IconButton>
        <IconButton $w={74} aria-label="Toggle tracks">
          <svg width="44" height="40" viewBox="0 0 44 40" fill="#5d5d5d" stroke="currentColor" strokeWidth="3">
            <path d="M2 2h40v36H2zM2 10h40M2 20h40M2 30h40" />
          </svg>
        </IconButton>
      </OverviewTools>

      <MarkerBar>
        {REGIONS.map((r) => (
          <React.Fragment key={r.name}>
            <MarkerFlag width="12" height="34" viewBox="0 0 12 34" style={{ left: at(r.start) }}>
              <path d="M0 0h12v33L1 20z" fill="#787878" />
              <path d="M8 7v13l-4-6z" fill="#232323" />
            </MarkerFlag>
            <MarkerName $fade={r.fade} style={{ left: at(r.start) }}>{r.name}</MarkerName>
          </React.Fragment>
        ))}
        <MarkerFlag width="14" height="34" viewBox="0 0 14 34" style={{ left: "100%" }}>
          <path d="M0 0h14v20L1 33z" fill="#8a8a8a" />
          <path d="M4 6v16l6-6V6z" fill="#232323" />
        </MarkerFlag>
      </MarkerBar>
      <Spacer />

      <Ruler>
        <RulerLabel $dim style={{ left: at(2.7) }}>hms</RulerLabel>
        {RULER.map(({ s, label }) => (
          <React.Fragment key={s}>
            <RulerTick $minor style={{ left: at(s - 5) }} />
            <RulerTick style={{ left: at(s) }} />
            <RulerLabel style={{ left: at(s) }}>{label}</RulerLabel>
          </React.Fragment>
        ))}
        <RulerTick $minor style={{ left: at(175) }} />
        <RulerLabel $dim style={{ left: at(178.7) }}>3</RulerLabel>
        <RulerTick style={{ left: at(90), bottom: 8, width: 12, marginLeft: -5, height: 10 }} />
        {[0, LYRICS, FADE, BLEED, DURATION - 0.2].map((t) => (
          <Dotted key={t} $tone="#b9ccc1" style={{ left: at(t) }} />
        ))}
        <Head width="34" height="35" viewBox="0 0 34 35" style={{ left: at(0) }}><Playhead color="#2270b4" /></Head>
        <Head width="34" height="35" viewBox="0 0 34 35" style={{ left: at(PLAYHEAD) }}><Playhead color="#2a8ff2" /></Head>
      </Ruler>
      <SnapCell>
        <SnapButton aria-label="Snapping">
          <svg width="40" height="38" viewBox="0 0 40 38" fill="none" stroke="#2a8ff2">
            <path d="M14 34H8V16a12 12 0 0 1 24 0v18h-6" strokeWidth="3" />
            <path d="M9 26V16a11 11 0 0 1 22 0v10" strokeWidth="11" />
            <path d="M3 27h12v8H3zM25 27h12v8H25z" strokeWidth="2" fill="#131315" />
          </svg>
        </SnapButton>
      </SnapCell>

      <WaveArea>
        <WaveChart />
        <Dotted $tone="#8a3a3e" style={{ left: 1 }} />
        {[LYRICS, FADE, BLEED, DURATION - 0.3].map((t) => <Dotted key={t} style={{ left: at(t) }} />)}
        <Playline style={{ left: at(PLAYHEAD) }} />
        <FadeHandle width="34" height="32" viewBox="0 0 34 32">
          <path d="M0 0h34v32H0z" fill="#c2c5c3" /><path d="M31 3v26H4z" fill="#5b5e5c" />
        </FadeHandle>
        <FadeHandle $right width="34" height="32" viewBox="0 0 34 32">
          <path d="M0 0h34v32H0z" fill="#c2c5c3" /><path d="M3 3v26h27z" fill="#5b5e5c" />
        </FadeHandle>
        <Hud>
          <HudGrip />
          <svg width="46" height="40" viewBox="0 0 46 40" fill="#6e706e"><path d="M0 40v-7h6v-3h6v-4h6v-4h6v-5h6v-4h4V8h5V0h5v40z" /></svg>
          <svg width="56" height="54" viewBox="0 0 56 54" fill="none" stroke="#9a9a9a" strokeWidth="5" style={{ marginLeft: 14 }}>
            <circle cx="28" cy="27" r="23" /><path d="M28 8v20" strokeWidth="4" />
          </svg>
          <Gain>
            <GainInput aria-label="Gain" defaultValue="+0" />dB
          </Gain>
          <PinButton aria-label="Pin">
            <svg width="34" height="34" viewBox="0 0 34 34" fill="currentColor">
              <path d="m20 2 12 11-4 1-6 8-1 6-6-5L3 32l9-14-6-5 7-1 8-6z" />
            </svg>
          </PinButton>
        </Hud>
      </WaveArea>
      <Axis><DecibelAxis channel="L" /><DecibelAxis channel="R" /></Axis>

      <Splitter><SplitGrip /></Splitter>
      <SplitEnd aria-label="Collapse spectrum">
        <svg width="18" height="9" viewBox="0 0 18 9" fill="#8a8a8a"><path d="M0 0h18L9 9z" /></svg>
      </SplitEnd>

      <SpectrumStack>
        <SpectrumChart seed={31} />
        <SpectrumChart seed={87} />
        {[LYRICS, FADE, BLEED].map((t) => <Dotted key={t} $tone="#dcd4dc" style={{ left: at(t) }} />)}
        <Playline $soft style={{ left: at(PLAYHEAD) }} />
      </SpectrumStack>
      <Axis style={{ borderBottom: "3px solid #080808" }}><HertzAxis /><HertzAxis /></Axis>
    </Board>
    <Transport>
      <Clock>2:41.714</Clock>
      <Buttons>
        {TRANSPORT.map(({ name, color, art }) => (
          <IconButton key={name} $w={87} aria-label={name} style={{ color }}>
            <svg width="46" height="30" viewBox="-8 0 46 30" fill="currentColor">{art}</svg>
          </IconButton>
        ))}
      </Buttons>
      <Spacer />
      <Buttons>
        {ZOOMS.map(([kind, name, dim]) => (
          <IconButton key={kind} $w={87} $dim={dim} aria-label={name}><ZoomGlyph kind={kind} /></IconButton>
        ))}
      </Buttons>
    </Transport>
  </EditorPanel>
);

const STEP = 161.4 / 2837;

const Levels = () => (
  <LevelsPanel>
    <LevelsTitle>
      <span>Levels</span>
      <svg width="26" height="40" viewBox="0 -9 26 40" fill="#bdbdbd">
        <path d="M0 1h26v3H0zM0 10h26v3H0zM0 19h26v3H0z" />
      </svg>
    </LevelsTitle>
    <Meter>
      <MeterRow>
        <MeterFill $color="#3af345" style={{ width: "79.4%" }} />
        <MeterFill $color="#f5d044" style={{ width: "2.7%" }} />
        <PeakHold style={{ left: "97.5%" }} />
      </MeterRow>
      <MeterRow>
        <MeterFill $color="#3af345" style={{ width: "69.6%" }} />
        <PeakHold style={{ left: "84%" }} />
      </MeterRow>
    </Meter>
    <MeterScale>
      {Array.from({ length: 18 }, (_, i) => (
        <React.Fragment key={i}>
          <ScaleTick style={{ left: `${i * STEP * 100}%` }} />
          <ScaleTick $minor style={{ left: `${(i + 1 / 3) * STEP * 100}%` }} />
          {i < 17 && <ScaleTick $minor style={{ left: `${(i + 2 / 3) * STEP * 100}%` }} />}
          <ScaleLabel $first={i === 0} style={{ left: `${i * STEP * 100}%` }}>
            {i === 0 ? "dB" : `${-60 + i * 3}`}
          </ScaleLabel>
        </React.Fragment>
      ))}
    </MeterScale>
  </LevelsPanel>
);

export default function App() {
  return (
    <Window>
      <GlobalStyle />
      <Toolbar>
        <ToolGroup>
          <IconButton aria-label="Lasso"><Lasso /></IconButton>
          <IconButton aria-label="Paintbrush"><Brush /></IconButton>
          <IconButton aria-label="Spot healing"><Healing /></IconButton>
          <ToolRule />
          <Invert>Invert</Invert>
        </ToolGroup>
        <Workspaces>
          <button>Default</button>
          <button>Edit Au</button>
        </Workspaces>
      </Toolbar>
      <Desk>
        <LeftColumn />
        <Column>
          <UpperRow>
            <Editor />
            <SidePanel>
              <SideTitle>Meta</SideTitle>
              <SideForm>
                <SideLabel $gap={240}>BW</SideLabel>
                <SideLabel $gap={234}>Reco</SideLabel>
                <SideLabel $gap={353}>Tra</SideLabel>
                <SideLabel $gap={93}>F</SideLabel>
                <SideLabel $gap={0}>Cop</SideLabel>
              </SideForm>
            </SidePanel>
          </UpperRow>
          <Levels />
        </Column>
      </Desk>
      <StatusBar><Rule /><Rule /></StatusBar>
      <Floating><FloatingTitle>E</FloatingTitle></Floating>
    </Window>
  );
}
